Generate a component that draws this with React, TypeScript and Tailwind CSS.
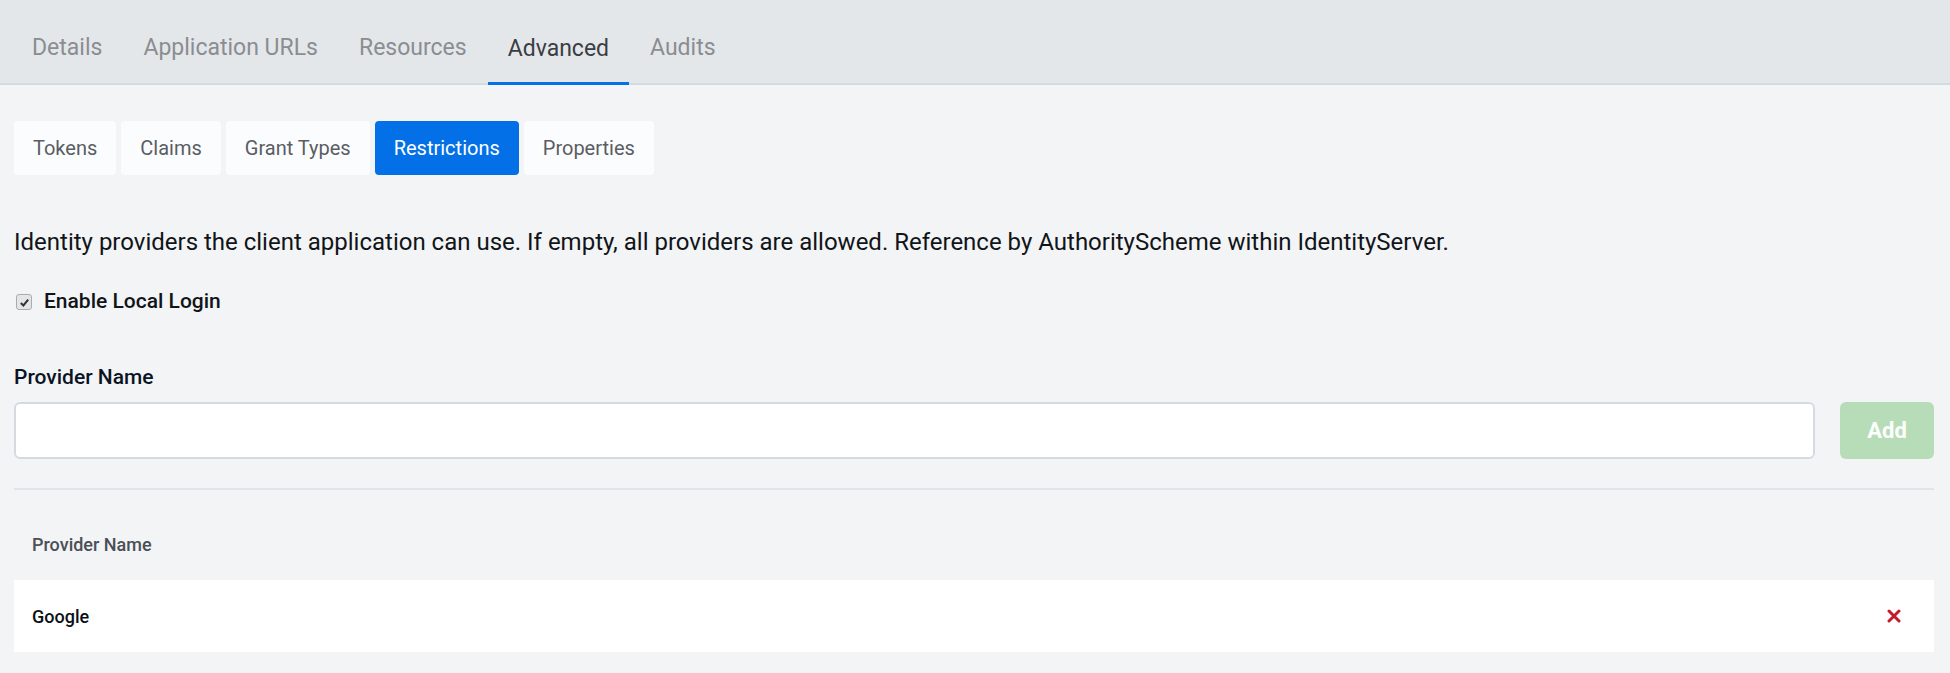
import React from "react";

const topTabs = ["Details", "Application URLs", "Resources", "Advanced", "Audits"];
const subTabs = ["Tokens", "Claims", "Grant Types", "Restrictions", "Properties"];

const App = () => {
	return (
		<div className="min-h-[673px] bg-[#f3f4f6] font-['Roboto',sans-serif]">
			<nav className="h-[85px] bg-[#e4e7ea] border-b-2 border-[#d5dadf] flex items-end pl-3">
				{topTabs.map((tab) => (
					<div
						key={tab}
						className={
							tab === "Advanced"
								? "h-[85px] -mb-[2px] px-5 mr-[1px] flex items-center text-[23px] text-[#3a3d42] border-b-[3px] border-[#0370e8] pt-[16px]"
								: "h-[83px] px-5 mr-[1px] flex items-center text-[23px] text-[#8a8d91] pt-[14px]"
						}
					>
						{tab}
					</div>
				))}
			</nav>

			<div className="pl-[14px] pr-4">
				<div className="flex gap-[5px] mt-[36px]">
					{subTabs.map((tab) => (
						<div
							key={tab}
							className={
								tab === "Restrictions"
									? "h-[54px] px-[19px] flex items-center rounded-[4px] bg-[#0370e8] text-white text-[20px]"
									: "h-[54px] px-[19px] flex items-center rounded-[4px] bg-[#fbfcfd] text-[#5a5d63] text-[20px]"
							}
						>
							{tab}
						</div>
					))}
				</div>

				<p className="mt-[51px] text-[24px] leading-[32px] text-[#111418]">
					Identity providers the client application can use. If empty, all providers are allowed. Reference by AuthorityScheme within IdentityServer.
				</p>

				<label className="mt-[30px] flex items-center h-[28px]">
					<span className="ml-[2px] w-4 h-4 rounded-[3px] border border-[#a9abad] bg-[#e4e5e6] flex items-center justify-center">
						<svg width="11" height="11" viewBox="0 0 12 12">
							<path d="M2 6.5 L4.8 9.2 L10 2.8" fill="none" stroke="#333" strokeWidth="2.2" />
						</svg>
					</span>
					<span className="ml-[12px] text-[21px] font-medium text-[#111418]">Enable Local Login</span>
				</label>

				<div className="mt-[47px] text-[21px] leading-[28px] font-medium text-[#0b1424]">Provider Name</div>

				<div className="mt-[11px] flex gap-[25px]">
					<input
						type="text"
						className="flex-1 h-[57px] rounded-[6px] border-2 border-[#d6dae0] bg-white outline-none px-3"
					/>
					<button className="w-[94px] h-[57px] rounded-[6px] bg-[#b7dcb8] text-white text-[22px] font-bold">
						Add
					</button>
				</div>

				<div className="mt-[29px] h-[2px] bg-[#e2e4e7]" />

				<div className="mt-[18px] h-[72px] flex items-center pl-[18px] text-[18px] font-medium text-[#4a4f57]">
					Provider Name
				</div>
				<div className="h-[72px] bg-white flex items-center justify-between pl-[18px] pr-[33px]">
					<span className="text-[18px] font-medium text-[#0b1016]">Google</span>
					<svg width="14" height="14" viewBox="0 0 14 14">
						<path d="M2 2 L12 12 M12 2 L2 12" stroke="#c41a2b" strokeWidth="3" strokeLinecap="round" />
					</svg>
				</div>
			</div>
		</div>
	);
};

export default App;
